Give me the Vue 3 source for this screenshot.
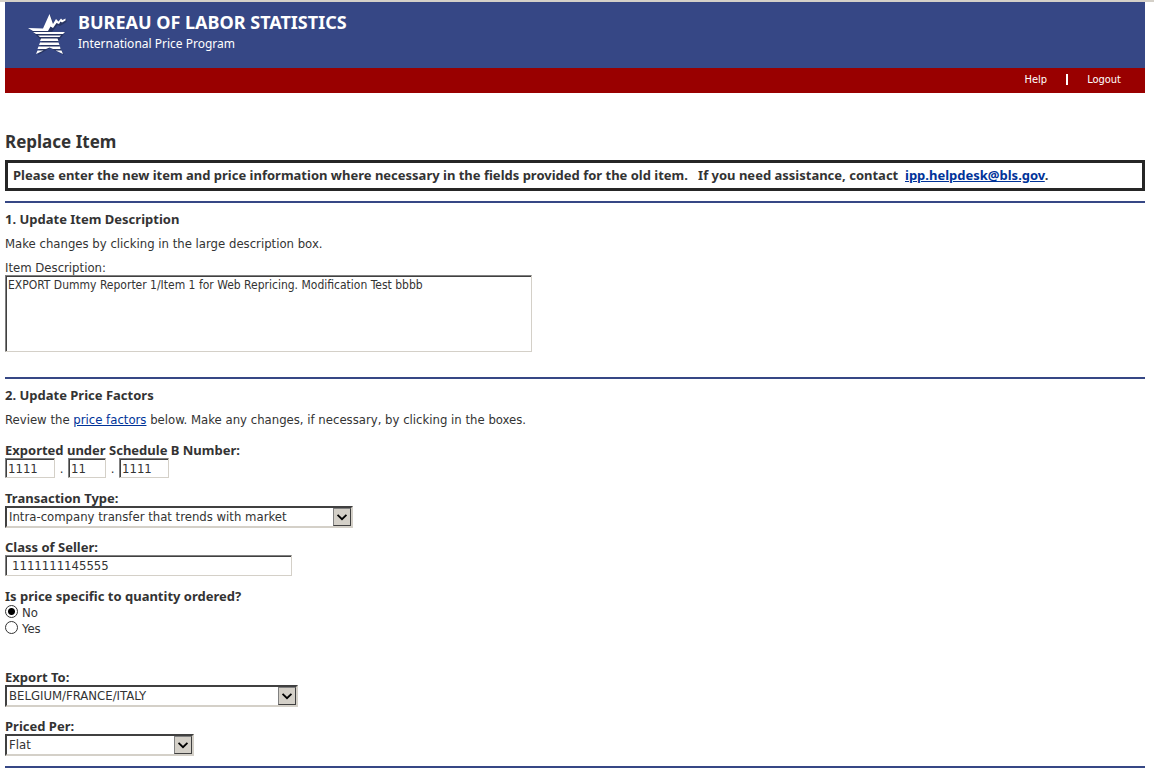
<script setup>
import { ref } from 'vue'

const description = ref('EXPORT Dummy Reporter 1/Item 1 for Web Repricing. Modification Test bbbb')
const schedule = ref(['1111', '11', '1111'])
const transaction = ref('Intra-company transfer that trends with market')
const seller = ref('1111111145555')
const byQuantity = ref('No')
const exportTo = ref('BELGIUM/FRANCE/ITALY')
const pricedPer = ref('Flat')
</script>

<template>
  <div class="page">
    <header>
      <div class="banner">
        <svg class="logo" width="40" height="42" viewBox="27 14 40 42" aria-hidden="true">
          <path class="shade" d="M30 29L44 29.500L50.500 15L54 25L57 20L60 22L66.500 19.500V22L60 26L57.500 25L52 32H65.500L57.500 42L64 55L50 48L38 55L42 41Z" />
          <path fill="#fff" d="M28 28L43 28.500L49.500 14L53 24L56 19L58.500 21.500L61 18.500L62.500 20L65.500 18.500V20.500L62 22.500L60.500 21.500L59 24L56.500 23L53 28L50.500 26.500L48 31H33Z" />
          <path fill="#fff" d="M33 32H65L63 34H36ZM38 35.500H61L59.500 37H40ZM41 38.500H57.500L58.500 41H40ZM40 42.500H58.500L59.500 45H39ZM38.500 46.500H60L60.500 49H53L49.500 47.500L46 49H37.500ZM37.500 50.500H43.500L36 54ZM55.500 50.500H61.500L63 54Z" />
        </svg>
        <div>
          <div class="agency">BUREAU OF LABOR STATISTICS</div>
          <div class="program">International Price Program</div>
        </div>
      </div>
      <nav>
        <a href="#help">Help</a>
        <span class="bar"></span>
        <a href="#logout">Logout</a>
      </nav>
    </header>

    <main>
      <h1>Replace Item</h1>
      <p class="notice">
        Please enter the new item and price information where necessary in the fields provided for the old item. &nbsp; If you need assistance, contact &nbsp;<a href="mailto:ipp.helpdesk@bls.gov">ipp.helpdesk@bls.gov</a>.
      </p>

      <section>
        <h2>1. Update Item Description</h2>
        <p>Make changes by clicking in the large description box.</p>
        <label class="plain" for="description">Item Description:</label>
        <textarea id="description" v-model="description"></textarea>
      </section>

      <section class="factors">
        <h2>2. Update Price Factors</h2>
        <p>Review the <a href="#factors">price factors</a> below. Make any changes, if necessary, by clicking in the boxes.</p>

        <div class="field">
          <label class="name" for="schedule">Exported under Schedule B Number:</label>
          <div class="parts">
            <input id="schedule" v-model="schedule[0]" class="four" type="text">
            <span>.</span>
            <input v-model="schedule[1]" class="two" type="text" aria-label="Schedule B Number, second part">
            <span>.</span>
            <input v-model="schedule[2]" class="four" type="text" aria-label="Schedule B Number, third part">
          </div>
        </div>

        <div class="field choose">
          <label class="name" for="transaction">Transaction Type:</label>
          <div class="drop wide">
            <select id="transaction" v-model="transaction"><option>Intra-company transfer that trends with market</option></select>
            <svg viewBox="0 0 18 18" aria-hidden="true"><path d="M4 6.500L9 11.500L14 6.500" /></svg>
          </div>
        </div>

        <div class="field">
          <label class="name" for="seller">Class of Seller:</label>
          <input id="seller" v-model="seller" class="seller" type="text">
        </div>

        <fieldset class="field">
          <legend class="name">Is price specific to quantity ordered?</legend>
          <label class="choice"><input v-model="byQuantity" type="radio" name="quantity" value="No">No</label>
          <label class="choice"><input v-model="byQuantity" type="radio" name="quantity" value="Yes">Yes</label>
        </fieldset>

        <div class="field choose export">
          <label class="name" for="export">Export To:</label>
          <div class="drop medium">
            <select id="export" v-model="exportTo"><option>BELGIUM/FRANCE/ITALY</option></select>
            <svg viewBox="0 0 18 18" aria-hidden="true"><path d="M4 6.500L9 11.500L14 6.500" /></svg>
          </div>
        </div>

        <div class="field">
          <label class="name" for="per">Priced Per:</label>
          <div class="drop narrow">
            <select id="per" v-model="pricedPer"><option>Flat</option></select>
            <svg viewBox="0 0 18 18" aria-hidden="true"><path d="M4 6.500L9 11.500L14 6.500" /></svg>
          </div>
        </div>
      </section>
    </main>
  </div>
</template>

<style>
body {
  background: #fff;
}
</style>

<style scoped>
.page {
  border-top: 2px solid #d4d0c8;
  padding: 0 9px 6px 5px;
  font: 13px/16px "DejaVu Sans Condensed", "DejaVu Sans", sans-serif;
  color: #333;
}
.banner {
  display: flex;
  gap: 11px;
  height: 66px;
  padding: 0 22px;
  box-sizing: border-box;
  background: #364785;
  color: #fff;
}
.logo {
  margin-top: 12px;
}
.shade {
  fill: #283563;
}
.agency {
  margin-top: 10px;
  font: bold 18px/20px "Noto Sans", sans-serif;
}
.program {
  margin-top: 3px;
  font: 12px/18px "Noto Sans", sans-serif;
}
nav {
  display: flex;
  align-items: center;
  justify-content: flex-end;
  height: 25px;
  padding: 0 24px 2px 0;
  box-sizing: border-box;
  background: #900;
  font-size: 11px;
}
nav a {
  color: #fff;
  text-decoration: none;
}
.bar {
  width: 2px;
  height: 11px;
  margin: 0 19px;
  background: #fff;
}
h1 {
  margin: 39px 0 8px;
  font: bold 17px/20px "Noto Sans", sans-serif;
}
h2,
.notice,
.name {
  font-family: "Noto Sans", sans-serif;
  font-weight: bold;
  font-size: 13px;
}
.notice {
  margin: 0 0 10px;
  padding: 4px 5px 5px;
  border: 3px solid #262626;
}
a {
  color: #039;
}
section {
  border-top: 2px solid #364785;
  padding-top: 8px;
}
h2 {
  margin: 0 0 9px;
  line-height: 16px;
}
section > p {
  margin: 0 0 8px;
}
.plain,
.name {
  display: block;
  padding: 0;
  line-height: 15px;
}
.factors {
  margin-top: 25px;
  padding-bottom: 10px;
  border-bottom: 2px solid #364785;
}
.factors > p {
  margin-bottom: 15px;
}
textarea,
input[type="text"] {
  display: block;
  box-sizing: border-box;
  margin: 0;
  border: 1px solid #d4d0c8;
  border-top-color: #808080;
  border-left-color: #808080;
  border-radius: 0;
  box-shadow: inset 1px 1px 0 #404040;
  background: #fff;
  color: #333;
  font: 13px/16px "DejaVu Sans Condensed", "DejaVu Sans", sans-serif;
  outline: 0;
}
textarea {
  width: 527px;
  height: 77px;
  padding: 1px 2px;
  font-size: 12px;
  resize: none;
}
input[type="text"] {
  height: 20px;
  padding: 1px 2px;
}
.field {
  margin: 0 0 13px;
  padding: 0;
  border: 0;
}
.choose {
  margin-bottom: 12px;
}
.field:last-child {
  margin-bottom: 0;
}
.parts {
  display: flex;
}
.parts span {
  width: 13px;
  padding-top: 3px;
  box-sizing: border-box;
  text-align: center;
}
.four {
  width: 50px;
}
.two {
  width: 38px;
}
input.seller {
  width: 287px;
  height: 21px;
  padding-left: 6px;
}
.drop {
  position: relative;
}
.wide {
  width: 348px;
}
.medium {
  width: 293px;
}
.narrow {
  width: 189px;
}
select {
  display: block;
  width: 100%;
  height: 22px;
  box-sizing: border-box;
  padding: 0 20px 0 2px;
  appearance: none;
  border: 2px solid;
  border-color: #404040 #d4d0c8 #d4d0c8 #404040;
  border-radius: 0;
  background: #fff;
  color: #333;
  font: 13px/16px "DejaVu Sans Condensed", "DejaVu Sans", sans-serif;
}
.drop svg {
  position: absolute;
  top: 2px;
  right: 2px;
  width: 18px;
  height: 18px;
  box-sizing: border-box;
  border: 1px solid #404040;
  border-top-color: #808080;
  border-left-color: #808080;
  background: #d4d0c8;
  pointer-events: none;
}
.drop path {
  fill: none;
  stroke: #000;
  stroke-width: 2;
}
.choice {
  display: flex;
  gap: 4px;
  height: 16px;
  line-height: 18px;
}
.choice input {
  appearance: none;
  width: 13px;
  height: 13px;
  box-sizing: border-box;
  margin: 1px 0 0;
  border: 1px solid #333;
  border-radius: 50%;
  background: #fff;
}
.choice input:checked {
  background: radial-gradient(circle, #000 3px, #fff 4px);
}
.export {
  margin-top: 34px;
}
</style>
